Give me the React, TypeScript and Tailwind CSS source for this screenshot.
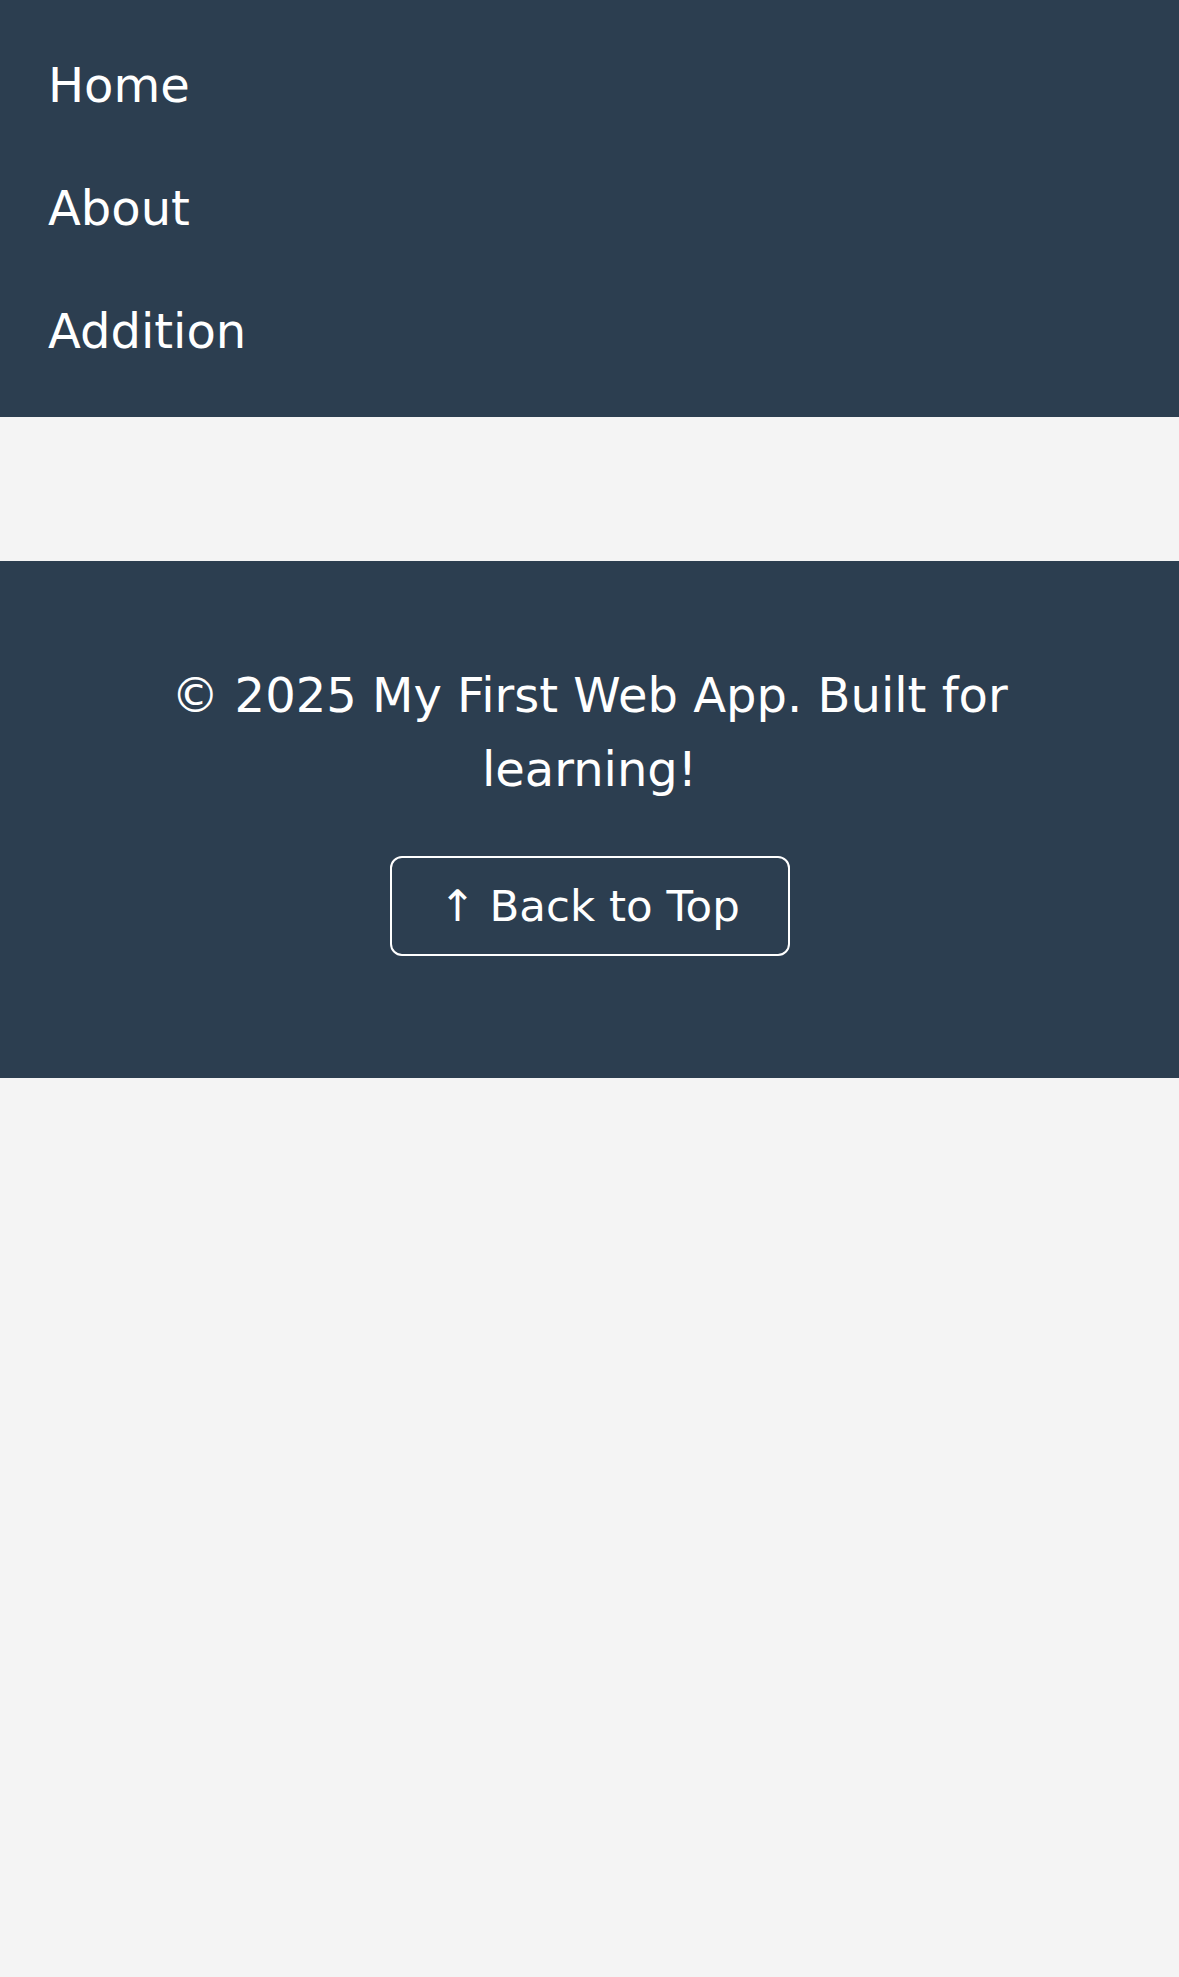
const links = ["Home", "About", "Addition"];

export default function App() {
  return (
    <div className="min-h-[1977px] bg-[#f4f4f4] font-['DejaVu_Sans',sans-serif] text-white">
      <nav className="bg-[#2c3e50] px-[48px] pt-[57px] pb-[58px]">
        <ul className="flex flex-col gap-[67px]">
          {links.map((l) => (
            <li key={l}>
              <a href="#" className="text-[48px] leading-[56px]">{l}</a>
            </li>
          ))}
        </ul>
      </nav>

      <main className="h-[144px]" />

      <footer className="bg-[#2c3e50] px-[100px] pt-[97px] pb-[122px] text-center">
        <p className="text-[48px] leading-[74px]">© 2025 My First Web App. Built for learning!</p>
        <button className="mt-[50px] h-[100px] w-[400px] rounded-[12px] border-2 border-white pt-[2px] text-[43.5px]">
          ↑ Back to Top
        </button>
      </footer>
    </div>
  );
}
